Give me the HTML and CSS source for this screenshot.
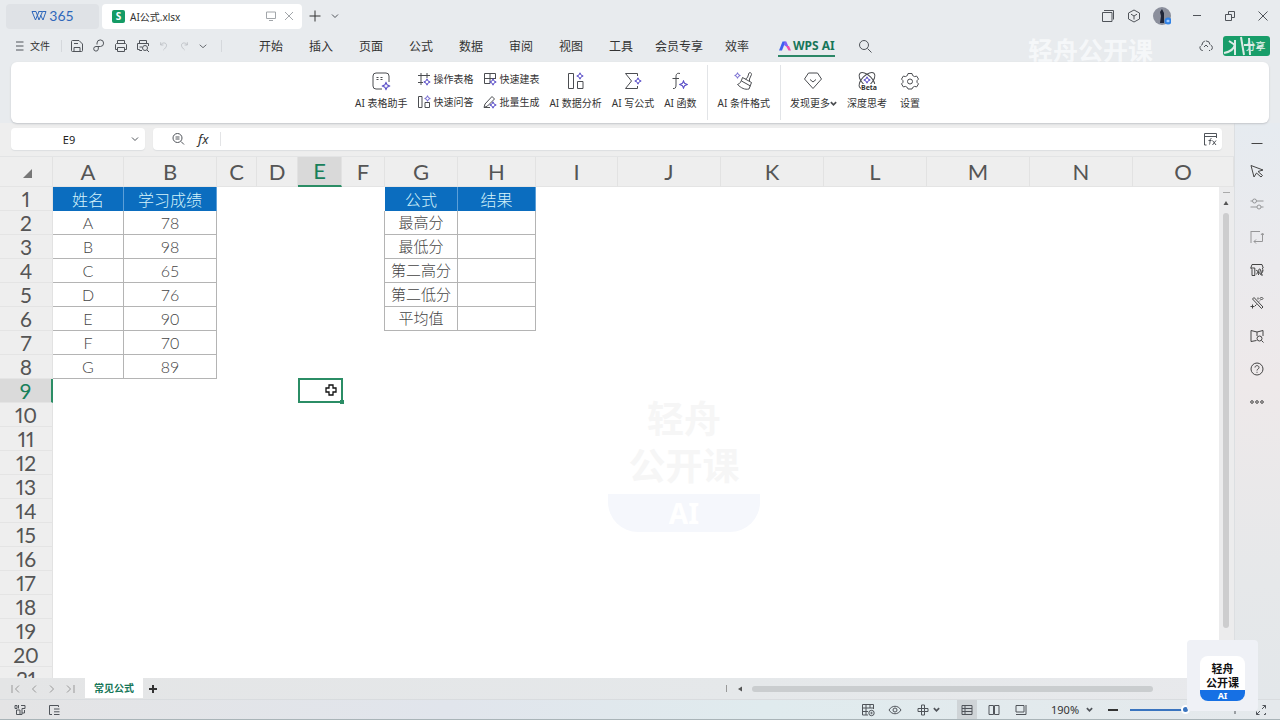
FILE: index.html
```html
<!DOCTYPE html>
<html lang="zh-CN">
<head>
<meta charset="utf-8">
<title>AI公式.xlsx</title>
<link rel="stylesheet" href="styles.css">
</head>
<body>
<svg class="defs" aria-hidden="true">
  <symbol id="spark" viewBox="0 0 8 8"><path d="M4 .8 5 3 7.2 4 5 5 4 7.2 3 5 .8 4 3 3Z" fill="#fff" stroke="#5b50c8"/></symbol>
  <symbol id="caret" viewBox="0 0 8 8"><path d="m1 2.500 3 3 3-3"/></symbol>
</svg>
<div class="app">
  <header class="titlebar">
    <button class="home-tab" aria-label="WPS 365"><svg class="wlogo" viewBox="0 0 17 12"><path d="M1 1.500h4l3 8.500 3.500-8.500H7.500M1 1.500 4.500 10 8 1.500M11.500 1.500H15L12 10 9.500 5"/></svg><span>365</span></button>
    <div class="doc-tab">
      <span class="s-badge">S</span><span class="doc-name">AI公式.xlsx</span>
      <svg class="ico pale" viewBox="0 0 12 12"><path d="M1.500 2h9v6.500h-9zM4 10.500h4"/></svg>
      <button class="plain" aria-label="关闭标签"><svg class="ico pale" viewBox="0 0 12 12"><path d="m2 2 8 8M10 2 2 10"/></svg></button>
    </div>
    <button class="plain new" aria-label="新建"><svg class="ico dark" viewBox="0 0 12 12"><path d="M6 .5v11M.5 6h11"/></svg></button>
    <button class="plain" aria-label="标签列表"><svg class="ico mini" viewBox="0 0 8 8"><use href="#caret"/></svg></button>
    <div class="window-tools">
      <button class="plain" aria-label="窗口"><svg class="ico lg" viewBox="0 0 14 14"><path d="M1.500 3.500h9.500v9H1.500zM3 1.500h9.500v9"/></svg></button>
      <button class="plain" aria-label="应用"><svg class="ico lg" viewBox="0 0 14 14"><path d="m7 1 5.500 3v6L7 13l-5.500-3V4zM4 5.200 7 7l3-1.800M7 7v3.500"/></svg></button>
      <button class="plain" aria-label="账户"><svg class="avatar" viewBox="0 0 18 18"><circle cx="9" cy="9" r="9" fill="#8b8f9c"/><path d="M7 16 8 9l-1-4 2-3 2 4v10z" fill="#202638"/><circle cx="15" cy="14" r="3.500" fill="#3283e6"/><path d="m13 14 2-1.500 2 1.500-2 1.500z" fill="#a9d0ff"/></svg></button>
      <button class="plain" aria-label="最小化"><svg class="ico" viewBox="0 0 12 12"><path d="M2 5.500h8"/></svg></button>
      <button class="plain" aria-label="还原"><svg class="ico" viewBox="0 0 12 12"><path d="M1.500 4.500h6v6h-6zM4.500 4.500v-3h6v6h-3"/></svg></button>
      <button class="plain" aria-label="关闭"><svg class="ico" viewBox="0 0 12 12"><path d="m1.500 1.500 9 9M10.500 1.500l-9 9"/></svg></button>
    </div>
  </header>

  <nav class="menubar">
    <button class="file"><svg class="ico" viewBox="0 0 12 12"><path d="M2 2h7.500M2 6h7.500M2 10h7.500"/></svg>文件</button>
    <div class="quick">
      <button class="plain" aria-label="保存"><svg class="ico lg" viewBox="0 0 14 14"><path d="M1.500 2.500a1 1 0 0 1 1-1H9L12.500 5v6.500a1 1 0 0 1-1 1h-9a1 1 0 0 1-1-1zM4 12.500v-4h6v4M4 4.500h4"/></svg></button>
      <button class="plain" aria-label="输出"><svg class="ico lg" viewBox="0 0 14 14"><path d="M5 5.500V4a3.300 3.300 0 1 1 3.500 3.500H4A2.300 2.300 0 1 0 6.300 10V8"/></svg></button>
      <button class="plain" aria-label="打印"><svg class="ico lg" viewBox="0 0 14 14"><path d="M3.500 4.500v-3h7v3M3.500 10.500h-2v-5l1-1h9l1 1v5h-2M3.500 8.500h7v4h-7z"/></svg></button>
      <button class="plain" aria-label="打印预览"><svg class="ico lg" viewBox="0 0 14 14"><path d="M3.500 4.500v-3h7v3M6 11.500H3.500v-1h-2v-6h11V7M3.500 8H6"/><circle cx="9" cy="9" r="2.500"/><path d="m11 11 2 2"/></svg></button>
      <button class="plain" aria-label="撤销"><svg class="ico faint" viewBox="0 0 12 12"><path d="M2 1.500v3.300h3.300M2.200 4.500C4 1.500 9 1.500 9 5.200 9 7.500 7 9 5.200 10.800"/></svg></button>
      <button class="plain" aria-label="恢复"><svg class="ico faint" viewBox="0 0 12 12"><path d="M10 1.500v3.300H6.700M9.800 4.500C8 1.500 3 1.500 3 5.200 3 7.500 5 9 6.800 10.800"/></svg></button>
      <button class="plain" aria-label="更多"><svg class="ico" viewBox="0 0 12 12"><path d="m2 4.500 4 3.500 4-3.500"/></svg></button>
    </div>
    <div class="tabs">
      <button>开始</button><button>插入</button><button>页面</button><button>公式</button><button>数据</button><button>审阅</button><button>视图</button><button>工具</button><button>会员专享</button><button>效率</button>
    </div>
    <button class="ai-tab"><svg class="ailogo" viewBox="0 0 14 12"><path d="M1 10.500 4.500 1.500h3L4 10.500z" fill="#3d5ff0"/><path d="M6.500 1.500h1.800l2.200 5H8.200L6 5z" fill="#7d62f5"/><path d="M8 6h3l2 4.500h-2.500z" fill="#f04ab0"/></svg>WPS AI</button>
    <button class="plain search" aria-label="搜索"><svg class="ico lg" viewBox="0 0 14 14"><circle cx="6" cy="6" r="4.500"/><path d="m9.500 9.500 4 4"/></svg></button>
    <div class="share-area">
      <button class="plain" aria-label="云同步"><svg class="ico lg" viewBox="0 0 14 14"><path d="M4 11.500H3.500A2.800 2.800 0 0 1 3 6a4 4 0 0 1 8-.2 2.900 2.900 0 0 1 0 5.700h-1M5 8l2-2 2 2" stroke-dasharray="6 1"/></svg></button>
      <button class="share">分享<svg class="share-haze" viewBox="0 0 47 20"><path d="M1 17q10-2 11-9M12 4v15M6 5l6 4M18 1l3 18M26 2l1 17M21 9h10M34 12l6-3" fill="none" stroke="#dcebe6" stroke-width="2"/></svg></button>
    </div>
    <div class="watermark-top">轻舟公开课</div>
  </nav>

  <section class="ribbon" aria-label="WPS AI">
    <button class="big"><svg viewBox="0 0 20 20"><path d="M11 18H5a3 3 0 0 1-3-3V5a3 3 0 0 1 3-3h10a3 3 0 0 1 3 3v6"/><path d="M6.500 6v3M10.500 6v3" stroke-dasharray="1 1" stroke-width="2"/><use href="#spark" x="10.500" y="10.500" width="9" height="9"/></svg>AI 表格助手</button>
    <div class="pair">
      <button><svg viewBox="0 0 14 14"><path d="M1 3.500h12M4 1v12M10 1v5M1 10.500h5"/><use href="#spark" x="6" y="6" width="8" height="8"/></svg>操作表格</button>
      <button><svg viewBox="0 0 14 14"><path d="M1.500 1.500h3.500v11H1.500zM8 7.500h4.500v5H8z"/><use href="#spark" x="7" y="0" width="7" height="7"/></svg>快速问答</button>
    </div>
    <div class="pair second">
      <button><svg viewBox="0 0 14 14"><path d="M7 11.500H1.500v-10h11V7M1.500 6.500h11M7 1.500v10"/><use href="#spark" x="6" y="6" width="8" height="8"/></svg>快速建表</button>
      <button><svg viewBox="0 0 14 14"><path d="M1 12.500 2 9l7-7.500 2.500 2.500L4.500 11zM1 12.500h6"/><use href="#spark" x="6" y="6" width="8" height="8"/></svg>批量生成</button>
    </div>
    <button class="big"><svg viewBox="0 0 20 20"><path d="M2.500 2.500h5v15h-5zM11.500 10.500h5.500v7h-5.500z"/><use href="#spark" x="10" y="1" width="8" height="8"/></svg>AI 数据分析</button>
    <button class="big"><svg viewBox="0 0 20 20"><path d="M14.500 5V2.500h-12l6 7.500-6 7.500h12V15"/><use href="#spark" x="11" y="6" width="8" height="8"/></svg>AI 写公式</button>
    <button class="big"><svg viewBox="0 0 20 20"><path d="M10 2.500C6.500 1.500 6 4 6 6v8c0 3-1 3.800-3 3.500M2.500 7.500H9"/><use href="#spark" x="9" y="9" width="9" height="9"/></svg>AI 函数</button>
    <button class="big split"><svg viewBox="0 0 20 20"><path d="M8.500 6.500 17.500 11.500 15 18c-4 1-8-1-11.500-4.500C6 13 7.500 10 8.500 6.500zM7.500 10l9 5M11.500 8l2-1.500 1.500-4.500c.7-1 2.800 0 2.500 1.500L15.500 8v2.200"/><use href="#spark" x="0" y="1" width="7" height="7"/></svg>AI 条件格式</button>
    <button class="big split more"><svg viewBox="0 0 20 20"><path d="M5.500 2h9L18.500 8 10 17.500 1.500 8zM7 8.500l3 2.500 3-2.500"/></svg><span>发现更多<svg class="tiny" viewBox="0 0 8 8"><use href="#caret"/></svg></span></button>
    <button class="big"><svg viewBox="0 0 20 20"><ellipse cx="10" cy="9.500" rx="10" ry="5" transform="rotate(45 10 9.500)"/><ellipse cx="10" cy="9.500" rx="10" ry="5" transform="rotate(-45 10 9.500)"/><use href="#spark" x="6" y="5" width="8" height="8"/><path d="M4 13h16v7H4z" fill="#fff" stroke="none"/><text class="beta" x="4" y="19">Beta</text></svg>深度思考</button>
    <button class="big"><svg viewBox="0 0 20 20"><path d="m8 2.500-.6 2-2 1.100-2.100-.5-1.800 3L3 9.700v1.600l-1.500 1.600 1.800 3 2.100-.5 2 1.100.6 1.500h4l.6-1.500 2-1.100 2.100.5 1.800-3L17 11.300V9.700l1.500-1.600-1.800-3-2.100.5-2-1.100-.6-2z"/><circle cx="10" cy="10.500" r="2.500"/></svg>设置</button>
  </section>

  <div class="workspace">
    <main class="main">
      <div class="formula-row">
        <div class="namebox"><input aria-label="名称框" value="E9"><svg class="ico mini" viewBox="0 0 8 8"><use href="#caret"/></svg></div>
        <div class="formula">
          <svg class="ico lg" viewBox="0 0 14 14"><circle cx="6.500" cy="6" r="4.500"/><path d="m10 9.500 3 3M4.500 5h4M4.500 7h4"/></svg>
          <span class="fx">fx</span>
          <input aria-label="编辑栏">
          <button class="plain" aria-label="展开编辑栏"><svg class="ico lg fxpanel" viewBox="0 0 14 14"><path d="M3.500 13h-2V1.500h12V6M1.500 4.500h12"/><path d="M8.500 6.500c-2-.5-1 3-2 6M5.500 8.500h3M9.500 8.500l3.500 4.500M13 8.500 9.500 13"/></svg></button>
        </div>
      </div>
      <div class="grid">
        <table>
          <colgroup><col class="w-head"><col class="w-a"><col class="w-b"><col class="w-c"><col class="w-d"><col class="w-e"><col class="w-f"><col class="w-g"><col class="w-h"><col class="w-i"><col class="w-j"><col class="w-j"><col class="w-j"><col class="w-j"><col class="w-j"><col></colgroup>
          <thead><tr><th class="corner"><svg viewBox="0 0 10 10"><path d="M10 0v10H0z"/></svg></th><th>A</th><th>B</th><th>C</th><th>D</th><th class="on">E</th><th>F</th><th>G</th><th>H</th><th>I</th><th>J</th><th>K</th><th>L</th><th>M</th><th>N</th><th>O</th></tr></thead>
          <tbody>
            <tr><th>1</th><td class="h">姓名</td><td class="h">学习成绩</td><td colspan="4"></td><td class="h">公式</td><td class="h">结果</td><td colspan="7"></td></tr>
            <tr><th>2</th><td class="c">A</td><td class="c">78</td><td colspan="4" class="edge"></td><td class="c f">最高分</td><td class="c"></td><td colspan="7"></td></tr>
            <tr><th>3</th><td class="c">B</td><td class="c">98</td><td colspan="4" class="edge"></td><td class="c f">最低分</td><td class="c"></td><td colspan="7"></td></tr>
            <tr><th>4</th><td class="c">C</td><td class="c">65</td><td colspan="4" class="edge"></td><td class="c f">第二高分</td><td class="c"></td><td colspan="7"></td></tr>
            <tr><th>5</th><td class="c">D</td><td class="c">76</td><td colspan="4" class="edge"></td><td class="c f">第二低分</td><td class="c"></td><td colspan="7"></td></tr>
            <tr><th>6</th><td class="c">E</td><td class="c">90</td><td colspan="4" class="edge"></td><td class="c f">平均值</td><td class="c"></td><td colspan="7"></td></tr>
            <tr><th>7</th><td class="c">F</td><td class="c">70</td><td colspan="13"></td></tr>
            <tr><th>8</th><td class="c">G</td><td class="c">89</td><td colspan="13"></td></tr>
            <tr><th class="on">9</th><td colspan="4"></td><td class="active"><span class="selection"><svg viewBox="0 0 12 12"><path d="M4 1h4v3h3v4H8v3H4V8H1V4h3z" fill="#fff" stroke="#111" stroke-width="1.300"/></svg></span></td><td colspan="10"></td></tr>
            <tr><th>10</th><td colspan="15"></td></tr>
            <tr><th>11</th><td colspan="15"></td></tr>
            <tr><th>12</th><td colspan="15"></td></tr>
            <tr><th>13</th><td colspan="15"></td></tr>
            <tr><th>14</th><td colspan="15"></td></tr>
            <tr><th>15</th><td colspan="15"></td></tr>
            <tr><th>16</th><td colspan="15"></td></tr>
            <tr><th>17</th><td colspan="15"></td></tr>
            <tr><th>18</th><td colspan="15"></td></tr>
            <tr><th>19</th><td colspan="15"></td></tr>
            <tr><th>20</th><td colspan="15"></td></tr>
            <tr><th>21</th><td colspan="15"></td></tr>
          </tbody>
        </table>
        <div class="vscroll"><i></i><svg viewBox="0 0 8 8"><path d="M4 2 6.500 6h-5z"/></svg><b></b></div>
        <div class="watermark-center"><span>轻舟</span><span>公开课</span><em>AI</em></div>
      </div>
      <div class="sheetbar">
        <div class="sheetnav">
          <button class="plain" aria-label="第一个"><svg class="ico" viewBox="0 0 12 12"><path d="M2 2v8M9 2.500 5.500 6 9 9.500"/></svg></button>
          <button class="plain" aria-label="上一个"><svg class="ico" viewBox="0 0 12 12"><path d="M8 2.500 4.500 6 8 9.500"/></svg></button>
          <button class="plain" aria-label="下一个"><svg class="ico" viewBox="0 0 12 12"><path d="M4 2.500 7.500 6 4 9.500"/></svg></button>
          <button class="plain" aria-label="最后一个"><svg class="ico" viewBox="0 0 12 12"><path d="M10 2v8M3 2.500 6.500 6 3 9.500"/></svg></button>
        </div>
        <button class="sheet">常见公式</button>
        <button class="plain addsheet" aria-label="新建工作表"><svg viewBox="0 0 10 10"><path d="M5 1v8M1 5h8"/></svg></button>
        <div class="hscroll"><i></i><svg viewBox="0 0 8 8"><path d="M2 4l4-2.500v5z"/></svg><b></b></div>
      </div>
    </main>
    <aside class="side">
      <button class="plain" aria-label="收起"><svg class="ico" viewBox="0 0 12 12"><path d="M.5 6.500h11"/></svg></button>
      <button class="plain" aria-label="选择"><svg class="ico lg" viewBox="0 0 14 14"><path d="m1 1.500 12 4.500-5 1.500 4.500 4-1.500 1.500-4.500-4L4 13z"/></svg></button>
      <button class="plain dim" aria-label="属性"><svg class="ico lg" viewBox="0 0 14 14"><circle cx="4.500" cy="4" r="2"/><circle cx="9" cy="10" r="2"/><path d="M6.500 4h7M.5 4h2M.5 10H7M11 10h2.500"/></svg></button>
      <button class="plain dim" aria-label="裁剪"><svg class="ico lg" viewBox="0 0 14 14"><path d="M1 1v12M1 1.500h9M12.500 4v7.500H4M4 11.500 6 9.500M4 11.500l2 2M12.500 3l-1.500 2M12.500 3l1.500 2"/></svg></button>
      <button class="plain" aria-label="表格美化"><svg class="ico lg" viewBox="0 0 14 14"><path d="M5 12.500H2v-6L.8 5 2 1.500h10L13.200 5 12 6M.8 5h4v7.500M6 8c2-3 2 4 0 3M8.500 12c0-3 0-7 1.500-6s-1 4 0 5 3-2 3-4-2 3-2 5h2"/></svg></button>
      <button class="plain" aria-label="工具"><svg class="ico lg" viewBox="0 0 14 14"><path d="m4 1.500 9 9.500-1.500 1.500-9-9.500zM2.500 8.500v4M.5 10.500h4M5 10l1.500-1.500M11.500 1 13 2.500l-1.500 1.500L10 2.500zM9 5.500 10 4.500M8 1.500v2"/></svg></button>
      <button class="plain" aria-label="查找"><svg class="ico lg" viewBox="0 0 14 14"><path d="M6.500 11.500 1 12.500V1.500l6 1.500 6-1.500V7M7 3v4"/><circle cx="9.500" cy="9.500" r="2.500"/><path d="m11.500 11.500 2 2"/></svg></button>
      <button class="plain" aria-label="帮助"><svg class="ico lg" viewBox="0 0 14 14"><circle cx="7" cy="7" r="6"/><path d="M5 5.500C5 3 9 3 9 5.500 9 7 7 7 7 8.500M7 9.800v1"/></svg></button>
      <button class="plain" aria-label="更多"><svg class="ico lg" viewBox="0 0 14 14"><circle cx="2" cy="7" r="1.300"/><circle cx="7" cy="7" r="1.300"/><circle cx="12" cy="7" r="1.300"/></svg></button>
    </aside>
  </div>

  <footer class="status">
    <svg class="ico" viewBox="0 0 12 12"><path d="M1 1.500h2v3H1zM4.500 1v3.500M7 1.500h4v3H8v6H2.500V6H6v4M8 9h2.500V6"/></svg>
    <svg class="ico list" viewBox="0 0 12 12"><path d="M10.500 3V1.500h-9v9H4M6 5h5.500M6 7.800h5.500M6 10.500h5.500"/></svg>
    <div class="status-right">
      <svg class="ico lg" viewBox="0 0 14 14"><path d="M7 12H1.500V1.500h11V6M1.500 5h11M1.500 8.500H7M5 1.500V12M9 1.500V5"/><circle cx="10.500" cy="10" r="2.700"/><circle cx="10.500" cy="10" r=".7"/></svg>
      <svg class="ico lg eye" viewBox="0 0 14 14"><path d="M1 7c3-5 9-5 12 0-3 5-9 5-12 0z"/><circle cx="7" cy="7" r="2"/></svg>
      <svg class="ico" viewBox="0 0 12 12"><path d="M4.500 1h3v10h-3zM4 4.500H1v3h3M8 4.500h3v3H8M4.500 4.500h3M4.500 7.500h3"/></svg>
      <svg class="ico tiny-caret" viewBox="0 0 8 8"><use href="#caret"/></svg>
      <button class="plain view on" aria-label="普通视图"><svg class="ico" viewBox="0 0 12 12"><path d="M1 1.500h10v9H1zM1 4.500h10M4 1.500v9M1 7.500h10"/></svg></button>
      <button class="plain view" aria-label="分页预览"><svg class="ico" viewBox="0 0 12 12"><path d="M1 1.500h4.500v9H1zM6.500 1.500H11v9H6.500z"/></svg></button>
      <button class="plain view" aria-label="阅读视图"><svg class="ico" viewBox="0 0 12 12"><path d="M1 1.500h8v6.500H1zM11 1v9.500H1"/></svg></button>
      <span class="zoom">190%</span>
      <svg class="ico tiny-caret zoom-caret" viewBox="0 0 8 8"><use href="#caret"/></svg>
      <button class="plain minus" aria-label="缩小"><svg class="ico dark" viewBox="0 0 12 12"><path d="M1 6h10"/></svg></button>
      <input class="slider" type="range" min="10" max="400" value="246" aria-label="缩放">
      <button class="plain plus" aria-label="放大"><svg class="ico" viewBox="0 0 12 12"><path d="M6 2v8M2 6h8"/></svg></button>
      <button class="plain" aria-label="全屏"><svg class="ico" viewBox="0 0 12 12"><path d="M7.500 1.500h3v3M10.500 1.500 7 5M1.500 7.500v3h3M1.500 10.500 5 7M1.500 3V1.500H3M10.500 9v1.500H9"/></svg></button>
    </div>
  </footer>
  <div class="brand"><div class="brand-card"><span>轻舟</span><span>公开课</span><em>AI</em></div></div>
</div>
</body>
</html>
```
FILE: styles.css
```css
* { box-sizing: border-box; }
body { margin: 0; font-family: "Noto Sans", "Noto Sans CJK SC", sans-serif; font-size: 10px; color: #333; }
button, input { font: inherit; color: inherit; border: 0; background: none; padding: 0; margin: 0; outline: 0; }
svg { display: block; flex: none; }
.defs { position: absolute; width: 0; height: 0; }
.app { position: relative; display: flex; flex-direction: column; height: 100vh; overflow: hidden; background: #e8ebee; }
.plain { display: flex; align-items: center; justify-content: center; }
.ico { width: 12px; height: 12px; fill: none; stroke: #50545a; stroke-width: 1; }
.ico.lg { width: 14px; height: 14px; }
.ico.mini { width: 8px; height: 8px; }
.ico.pale { stroke: #a2a6aa; }
.ico.faint { stroke: #b9bdc2; }
.ico.dark { stroke: #333; }

.titlebar { display: flex; align-items: center; height: 32px; padding: 3px 10px 3px 6px; flex: none; }
.home-tab { display: flex; align-items: center; justify-content: center; gap: 1px; width: 93px; height: 25px; border-radius: 4px; background: #dfe2e6; color: #2f68bb; font: 14px/24px Lato, sans-serif; }
.wlogo { width: 17px; height: 12px; fill: none; stroke: #2f68bb; stroke-width: 1; }
.doc-tab { display: flex; align-items: center; width: 200px; height: 25px; margin-left: 3px; padding: 0 7px 0 10px; border-radius: 4px; background: #fff; gap: 5px; font-size: 10px; }
.doc-tab .plain { margin-left: 1px; }
.s-badge { width: 13px; height: 13px; border-radius: 2px; background: #149b65; color: #fff; font: bold 10px/13px "Noto Sans", sans-serif; text-align: center; }
.doc-name { flex: 1; }
.new { margin: 0 10px 0 7px; }
.window-tools { display: flex; align-items: center; margin-left: auto; gap: 12px; }
.window-tools .plain { min-width: 14px; }
.window-tools .plain:nth-child(n+4) { width: 12px; margin-left: 7px; }
.avatar { width: 18px; height: 18px; }

.menubar { position: relative; display: flex; align-items: center; height: 30px; padding: 0 10px 3px 14px; flex: none; }
.file { display: flex; align-items: center; gap: 4px; width: 47px; font-size: 10px; }
.quick { display: flex; align-items: center; gap: 8px; padding-left: 8px; width: 161px; height: 12px; border-left: 1px solid #d5d8dc; border-right: 1px solid #d5d8dc; }
.quick .plain:nth-child(n+5) .ico { width: 10px; height: 10px; }
.quick .faint { margin: 0 1px; }
.tabs { display: flex; margin-left: 24px; font-size: 12px; }
.tabs button { min-width: 50px; padding: 2px 9px 0; line-height: 20px; }
.ai-tab { display: flex; align-items: center; gap: 1px; height: 22px; margin: 0 16px; padding-top: 2px; border-bottom: 2px solid #2c8767; color: #18765a; font-size: 12px; font-weight: bold; line-height: 18px; }
.ailogo { width: 14px; height: 12px; }
.search { margin-left: 7px; }
.share-area { display: flex; align-items: center; gap: 10px; margin-left: auto; }
.share { position: relative; width: 47px; height: 20px; padding-left: 18px; border-radius: 3px; background: #189d69; color: #e8f7f0; font-size: 10px; }
.share-haze { position: absolute; inset: 0; width: 47px; height: 20px; }
.watermark-top { position: absolute; right: 127px; top: 3px; color: #f8fafb; font: bold 25px/28px "Noto Sans CJK SC", sans-serif; opacity: .85; }

.ribbon { display: flex; flex: none; height: 61px; margin: 0 11px; padding: 3px 0 3px 344px; border-radius: 6px; background: #fff; box-shadow: 0 1px 2px #c2c5c9; gap: 10px; position: relative; }
.ribbon button { white-space: nowrap; line-height: 14px; }
.ribbon svg { fill: none; stroke: #4b4d51; stroke-width: 1; }
.big { display: flex; flex-direction: column; align-items: center; gap: 5px; min-width: 26px; padding-top: 6px; }
.big > svg { width: 20px; height: 20px; }
.big span { display: flex; align-items: center; }
.ribbon .tiny { width: 7px; height: 7px; stroke-width: 2; }
.beta { font: bold 7px "Noto Sans", sans-serif; fill: #333; stroke: none; }
.pair { display: flex; flex-direction: column; gap: 9px; padding-top: 7px; }
.pair button { display: flex; align-items: center; gap: 2px; }
.pair svg { width: 14px; height: 14px; }
.split { border-left: 1px solid #e2e4e7; padding-left: 10px; }
.more { padding-left: 9px; }

.workspace { display: flex; flex: 1; min-height: 0; }
.main { display: flex; flex-direction: column; flex: 1; min-width: 0; background: #eee; }
.formula-row { display: flex; gap: 8px; height: 34px; padding: 5px 12px 6px 11px; flex: none; border-bottom: 1px solid #e3e4e5; }
.namebox, .formula { display: flex; align-items: center; background: #fff; border-radius: 4px; box-shadow: 0 1px 1px #dcdee0; }
.namebox { width: 134px; padding-right: 6px; }
.namebox input { flex: 1; min-width: 0; padding-right: 4px; text-align: center; font-size: 11px; color: #222; }
.formula { flex: 1; padding: 0 5px 0 18px; }
.fx { width: 30px; padding-left: 13px; font: italic 13px/20px "Noto Sans", sans-serif; }
.formula input { flex: 1; min-width: 0; height: 14px; margin-left: 5px; border-left: 1px solid #e3e4e6; }

.grid { position: relative; flex: 1; min-height: 0; overflow: hidden; background: #fff; }
table { width: 100%; table-layout: fixed; border-collapse: separate; border-spacing: 0; font-family: Lato, "Noto Sans CJK SC", sans-serif; }
.w-head { width: 53px; } .w-a { width: 71px; } .w-b { width: 93px; } .w-c { width: 40px; } .w-d { width: 41px; }
.w-e { width: 44px; } .w-f { width: 43px; } .w-g { width: 73px; } .w-h { width: 78px; } .w-i { width: 82px; } .w-j { width: 103px; }
th, td { padding: 0; height: 24px; line-height: 23px; text-align: center; white-space: nowrap; }
th { background: #eee; color: #555; font-size: 21px; font-weight: 400; border-bottom: 1px solid #e4e4e4; }
tbody th { border-right: 1px solid #e2e2e2; font-variant-numeric: proportional-nums; }
thead th { height: 30px; line-height: 29px; border-right: 1px solid #e2e2e2; font-size: 22px; }
.corner svg { width: 9px; height: 9px; margin: 3px 0 0 23px; fill: #777; }
thead .on { background: #d9d9d9; color: #18805a; border-bottom: 2px solid #2b8d65; line-height: 28px; }
tbody .on { background: #dadada; color: #18805a; border-right: 2px solid #2b8d65; }
.h { background: #0b6dbf; color: #d5f3fb; font-size: 16px; font-weight: 300; border-right: 1px solid #5c9fd8; }
.c { border-right: 1px solid #b4b4b4; border-bottom: 1px solid #b4b4b4; color: #444; font-size: 16px; font-weight: 300; }
.f { font-size: 15px; }
.edge { border-right: 1px solid #b4b4b4; }
.active { position: relative; }
.selection { position: absolute; inset: -1px -1px 0 0; border: 2px solid #2b8d65; }
.selection::after { content: ""; position: absolute; right: -3px; bottom: -3px; width: 4px; height: 4px; background: #2b8d65; }
.selection svg { position: absolute; right: 4px; top: 4px; width: 12px; height: 12px; }
.vscroll { position: absolute; right: 0; top: 30px; bottom: 0; width: 15px; display: flex; flex-direction: column; align-items: center; padding: 5px 1px 50px 0; background: #ececed; }
.vscroll i { width: 7px; height: 1px; background: #aaa; }
.vscroll svg { width: 8px; height: 8px; margin: 6px 0; fill: #555; }
.vscroll b { flex: 1; width: 6px; border-radius: 3px; background: #cdcdce; }
.watermark-center { position: absolute; left: 608px; top: 227px; width: 152px; height: 148px; border-radius: 30px; overflow: hidden; display: flex; flex-direction: column; align-items: center; padding-top: 10px; color: #f6f6f6; font: bold 37px/47px "Noto Sans CJK SC", sans-serif; }
.watermark-center em { align-self: stretch; flex: 1; margin-top: 6px; background: #f5f7fc; color: #fff; text-align: center; font: bold 28px/38px "Noto Sans", sans-serif; }

.sheetbar { display: flex; align-items: center; height: 21px; flex: none; background: linear-gradient(90deg, #e4e5e6, #e5e8ea 60%, #e8e9ec); }
.sheetnav { display: flex; gap: 6px; width: 85px; padding-left: 10px; }
.sheetnav .ico { stroke: #999; }
.sheet { align-self: flex-start; height: 20px; padding: 0 9px 1px; background: #fff; color: #19785a; font-weight: bold; font-size: 10px; }
.addsheet { margin-left: 5px; }
.addsheet svg { width: 10px; height: 10px; stroke: #333; stroke-width: 2; }
.hscroll { display: flex; align-items: center; width: 508px; margin-left: auto; padding-right: 81px; }
.hscroll i { width: 1px; height: 7px; background: #999; }
.hscroll svg { width: 8px; height: 8px; margin: 0 8px 0 9px; fill: #555; }
.hscroll b { flex: 1; height: 6px; border-radius: 3px; background: #cacdcf; }

.side { width: 46px; flex: none; display: flex; flex-direction: column; border-left: 1px solid #dcdfe2; background: linear-gradient(#e6ebf0, #ebeaed 25%, #eee9ea 45%, #e6e8ea 80%, #e3e7ea); padding: 8px 2px 0 0; }
.side .plain { height: 33px; }
.side .plain:first-child { height: 23px; }
.side .dim { opacity: .5; }
.side .ico { stroke: #444; }

.status { display: flex; align-items: center; height: 21px; flex: none; padding: 0 13px 0 14px; border-top: 1px solid #d9dcdf; border-bottom: 1px solid #a9b4b8; background: linear-gradient(90deg, #e4e4e5, #e1e5ec 35%, #e0ebee 60%, #e5e9ec); }
.list { margin-left: 22px; }
.status-right { display: flex; align-items: center; margin-left: auto; }
.eye { margin: 0 15px 0 13px; }
.tiny-caret { width: 7px; height: 7px; margin-left: 4px; stroke-width: 2; }
.view { width: 20px; height: 19px; margin-right: 7px; }
.view.on { background: #cfd4d7; margin-left: 17px; }
.zoom { width: 33px; margin-left: 13px; font-size: 11px; }
.zoom-caret { margin-left: 2px; }
.minus { margin: 0 11px 0 14px; }
.minus .ico { stroke-width: 2; }
.slider { appearance: none; width: 94px; height: 9px; background: linear-gradient(#3974bf, #3974bf) 0 50% / 54px 2px no-repeat; }
.slider::-webkit-slider-thumb { appearance: none; width: 9px; height: 9px; border-radius: 5px; border: 2px solid #fff; background: #3974bf; }
.plus { margin: 0 14px 0 5px; }

.brand { position: absolute; right: 22px; bottom: 9px; width: 71px; height: 71px; padding: 16px 13px; background: #eff1f6; border-radius: 4px; }
.brand-card { display: flex; flex-direction: column; align-items: center; width: 45px; height: 45px; padding-top: 5px; border-radius: 8px; overflow: hidden; background: #fff; color: #111; font: bold 11px/14px "Noto Sans CJK SC", sans-serif; }
.brand-card em { align-self: stretch; flex: 1; margin-top: 1px; background: #1670e4; color: #fff; text-align: center; font: bold 9px/11px "Noto Sans", sans-serif; }
```
